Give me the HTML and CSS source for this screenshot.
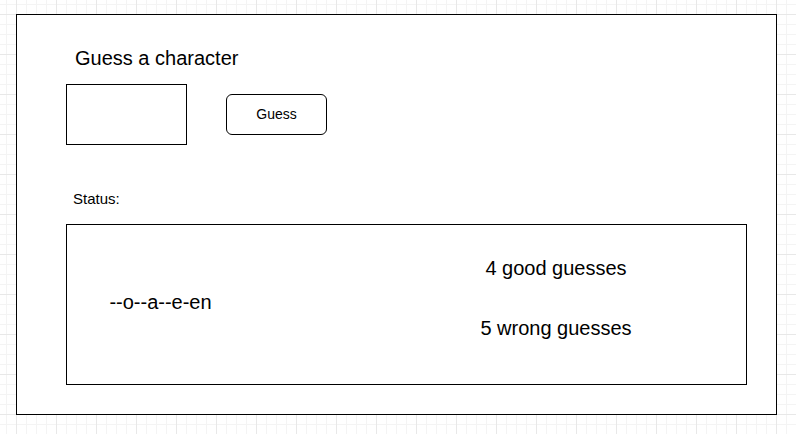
FILE: index.html
```html
<!DOCTYPE html>
<html lang="en">
<head>
<meta charset="utf-8">
<title>Guess a character</title>
<link rel="stylesheet" href="styles.css">
</head>
<body>
  <div class="frame">
    <div class="title">Guess a character</div>
    <div class="input-row">
      <div class="char-input"></div>
      <div class="guess-btn">Guess</div>
    </div>
    <div class="status-label">Status:</div>
    <div class="status-box">
      <div class="word">--o--a--e-en</div>
      <div class="counts">
        <div class="count">4 good guesses</div>
        <div class="count">5 wrong guesses</div>
      </div>
    </div>
  </div>
</body>
</html>
```

FILE: styles.css
```css
html {
  height: 100%;
  background-color: #ffffff;
  background-image:
    linear-gradient(to right, #e8e8e8 1px, transparent 1px),
    linear-gradient(to bottom, #e8e8e8 1px, transparent 1px),
    linear-gradient(to right, #f4f4f4 1px, transparent 1px),
    linear-gradient(to bottom, #f4f4f4 1px, transparent 1px);
  background-size: 40px 40px, 40px 40px, 10px 10px, 10px 10px;
  background-position: 16px 14px, 16px 14px, 6px 4px, 6px 4px;
}

body {
  margin: 0;
  padding: 14px 0 0 16px;
  font-family: "Liberation Sans", Arial, sans-serif;
  color: #000;
}

.frame {
  box-sizing: border-box;
  width: 761px;
  height: 401px;
  border: 1px solid #000;
  background: #fff;
  display: flex;
  flex-direction: column;
  align-items: flex-start;
}

.title {
  margin: 31px 0 0 58px;
  font-size: 20px;
  line-height: 24px;
}

.input-row {
  display: flex;
  align-items: flex-start;
  margin: 14px 0 0 49px;
}

.char-input {
  box-sizing: border-box;
  width: 121px;
  height: 61px;
  border: 1px solid #000;
}

.guess-btn {
  box-sizing: border-box;
  width: 101px;
  height: 41px;
  margin: 10px 0 0 39px;
  padding-bottom: 2px;
  border: 1px solid #000;
  border-radius: 6px;
  display: flex;
  align-items: center;
  justify-content: center;
  font-size: 14px;
}

.status-label {
  margin: 45px 0 0 56px;
  font-size: 15px;
  line-height: 18px;
}

.status-box {
  box-sizing: border-box;
  width: 681px;
  height: 161px;
  margin: 16px 0 0 49px;
  border: 1px solid #000;
  display: flex;
  align-items: flex-start;
}

.word {
  width: 187px;
  margin-top: 65px;
  text-align: center;
  font-size: 20px;
  line-height: 24px;
}

.counts {
  width: 200px;
  margin: 31px 0 0 202px;
  display: flex;
  flex-direction: column;
  gap: 36px;
}

.count {
  text-align: center;
  font-size: 20px;
  line-height: 24px;
}
```
